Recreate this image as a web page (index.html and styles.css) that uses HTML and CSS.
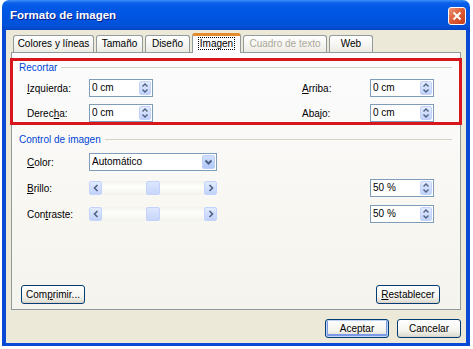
FILE: index.html
```html
<!DOCTYPE html>
<html lang="es">
<head>
<meta charset="UTF-8" />
<title>Formato de imagen</title>
<link rel="stylesheet" href="styles.css">
</head>
<body>

<div class="window">
  <div class="titlebar">
    <span class="title">Formato de imagen</span>
    <span class="close">
      <svg width="10" height="10" viewBox="0 0 10 10"><path d="M1.5 1.5 L8.5 8.5 M8.5 1.5 L1.5 8.5" stroke="#fff" stroke-width="2" fill="none"/></svg>
    </span>
  </div>

  <div class="body">
    <div class="tabs">
      <div class="tab tab-colores">Colores y líneas</div>
      <div class="tab tab-tamano">Tamaño</div>
      <div class="tab tab-diseno">Diseño</div>
      <div class="tab tab-imagen active"><span class="focus">Imagen</span></div>
      <div class="tab tab-cuadro disabled">Cuadro de texto</div>
      <div class="tab tab-web">Web</div>
    </div>

    <div class="panel">
      <div class="crop">
        <div class="legend">Recortar</div>
        <div class="crop-row">
          <label><u>I</u>zquierda:</label>
          <div class="spin"><span class="val">0 cm</span><span class="spin-btn"><svg width="8" height="12" viewBox="0 0 8 12"><path d="M1.5 4.5 L4 2 L6.5 4.5 M1.5 7.5 L4 10 L6.5 7.5" stroke="#4d6185" stroke-width="1.4" fill="none"/></svg></span></div>
          <span></span>
          <label><u>A</u>rriba:</label>
          <div class="spin"><span class="val">0 cm</span><span class="spin-btn"><svg width="8" height="12" viewBox="0 0 8 12"><path d="M1.5 4.5 L4 2 L6.5 4.5 M1.5 7.5 L4 10 L6.5 7.5" stroke="#4d6185" stroke-width="1.4" fill="none"/></svg></span></div>
        </div>
        <div class="crop-row">
          <label>Derec<u>h</u>a:</label>
          <div class="spin"><span class="val">0 cm</span><span class="spin-btn"><svg width="8" height="12" viewBox="0 0 8 12"><path d="M1.5 4.5 L4 2 L6.5 4.5 M1.5 7.5 L4 10 L6.5 7.5" stroke="#4d6185" stroke-width="1.4" fill="none"/></svg></span></div>
          <span></span>
          <label>Aba<u>j</u>o:</label>
          <div class="spin"><span class="val">0 cm</span><span class="spin-btn"><svg width="8" height="12" viewBox="0 0 8 12"><path d="M1.5 4.5 L4 2 L6.5 4.5 M1.5 7.5 L4 10 L6.5 7.5" stroke="#4d6185" stroke-width="1.4" fill="none"/></svg></span></div>
        </div>
      </div>

      <div class="section">
        <div class="legend">Control de imagen</div>
        <div class="ctrl-row first">
          <label><u>C</u>olor:</label>
          <div class="select"><span class="val">Automático</span><span class="drop-btn"><svg width="9" height="7" viewBox="0 0 9 7"><path d="M1.5 1.5 L4.5 4.5 L7.5 1.5" stroke="#4d6185" stroke-width="2" fill="none"/></svg></span></div>
        </div>
        <div class="ctrl-row">
          <label><u>B</u>rillo:</label>
          <div class="scroll">
            <span class="scroll-btn"><svg width="6" height="8" viewBox="0 0 6 8"><path d="M4.5 1 L1.5 4 L4.5 7" stroke="#4d6185" stroke-width="1.6" fill="none"/></svg></span>
            <span class="track"><span class="thumb"></span></span>
            <span class="scroll-btn"><svg width="6" height="8" viewBox="0 0 6 8"><path d="M1.5 1 L4.5 4 L1.5 7" stroke="#4d6185" stroke-width="1.6" fill="none"/></svg></span>
          </div>
          <span></span>
          <div class="spin"><span class="val">50 %</span><span class="spin-btn"><svg width="8" height="12" viewBox="0 0 8 12"><path d="M1.5 4.5 L4 2 L6.5 4.5 M1.5 7.5 L4 10 L6.5 7.5" stroke="#4d6185" stroke-width="1.4" fill="none"/></svg></span></div>
        </div>
        <div class="ctrl-row">
          <label>Con<u>t</u>raste:</label>
          <div class="scroll">
            <span class="scroll-btn"><svg width="6" height="8" viewBox="0 0 6 8"><path d="M4.5 1 L1.5 4 L4.5 7" stroke="#4d6185" stroke-width="1.6" fill="none"/></svg></span>
            <span class="track"><span class="thumb"></span></span>
            <span class="scroll-btn"><svg width="6" height="8" viewBox="0 0 6 8"><path d="M1.5 1 L4.5 4 L1.5 7" stroke="#4d6185" stroke-width="1.6" fill="none"/></svg></span>
          </div>
          <span></span>
          <div class="spin"><span class="val">50 %</span><span class="spin-btn"><svg width="8" height="12" viewBox="0 0 8 12"><path d="M1.5 4.5 L4 2 L6.5 4.5 M1.5 7.5 L4 10 L6.5 7.5" stroke="#4d6185" stroke-width="1.4" fill="none"/></svg></span></div>
        </div>
      </div>

      <div class="panel-buttons">
        <button>Com<u>p</u>rimir...</button>
        <button><u>R</u>establecer</button>
      </div>
    </div>

    <div class="footer">
      <button class="default">Aceptar</button>
      <button>Cancelar</button>
    </div>
  </div>
</div>

</body>
</html>
```

FILE: styles.css
```css
body {
  margin: 0;
  background: #fff;
  font-family: "Liberation Sans", Arial, sans-serif;
  font-size: 10px;
  color: #000;
}
.window {
  margin-left: 2px;
  width: 468px;
  height: 346px;
  display: flex;
  flex-direction: column;
}
.titlebar {
  height: 30px;
  flex: none;
  box-sizing: border-box;
  display: flex;
  align-items: center;
  justify-content: space-between;
  padding: 0 4px 0 8px;
  border-radius: 7px 7px 0 0;
  background: linear-gradient(#3d8ff6 0, #0b60ea 3px, #0058e6 8px, #0055e2 50%, #0151d9 85%, #0044c6 100%);
}
.title {
  color: #fff;
  font-weight: bold;
  font-size: 11.5px;
  text-shadow: 1px 1px #0a1d8c;
}
.close {
  width: 18px;
  height: 18px;
  margin-top: 2px;
  box-sizing: border-box;
  border: 1px solid #fff;
  border-radius: 3px;
  background: linear-gradient(135deg, #ec9a7a, #dc5a32 50%, #c8401c);
  display: flex;
  align-items: center;
  justify-content: center;
}
.body {
  flex: 1;
  display: flex;
  flex-direction: column;
  background: #ece9d8;
  border: solid #0a48d6;
  border-width: 0 4px 3px;
  padding: 3px 5px 0;
}
.tabs {
  height: 20px;
  display: flex;
  align-items: flex-end;
  gap: 2px;
  padding-left: 2px;
  position: relative;
  z-index: 1;
}
.tab {
  height: 17px;
  margin-bottom: 1px;
  box-sizing: border-box;
  text-align: center;
  line-height: 16px;
  border: 1px solid #919b9c;
  border-bottom: none;
  border-radius: 3px 3px 0 0;
  background: linear-gradient(#fff, #f4f4f0 60%, #ecebe2);
}
.tab-colores { width: 81px; }
.tab-tamano { width: 47px; }
.tab-diseno { width: 45px; }
.tab-imagen { width: 49px; }
.tab-cuadro { width: 84px; }
.tab-web { width: 44px; }
.tab.disabled {
  color: #aca899;
}
.tab.active {
  height: 20px;
  margin-bottom: 0;
  line-height: 16px;
  border-top: 3px solid #e68b2c;
  background: #fcfcfe;
}
.focus {
  outline: 1px dotted #000;
  padding: 0 1px;
}
.panel {
  height: 258px;
  margin-top: -1px;
  box-sizing: border-box;
  border: 1px solid #919b9c;
  background: linear-gradient(#fcfcfe, #f8f7f2 60%, #f4f3ee);
  display: flex;
  flex-direction: column;
}
.crop {
  margin: 5px -2px 0;
  border: 3px solid #d8161e;
  padding: 0 7px 0 6px;
}
.legend {
  height: 13px;
  display: flex;
  align-items: center;
  gap: 4px;
  color: #0046d5;
}
.legend::after {
  content: "";
  flex: 1;
  border-top: 1px solid #d5d2c4;
}
.crop-row {
  display: grid;
  grid-template-columns: 62px 64px 1fr 68px 64px;
  align-items: center;
  height: 18px;
  margin-top: 7px;
  padding: 0 18px 0 8px;
}
.legend + .crop-row {
  margin-top: 5px;
}
.spin,
.select {
  height: 18px;
  box-sizing: border-box;
  border: 1px solid #7f9db9;
  background: #fff;
  display: flex;
  align-items: stretch;
}
.spin {
  width: 64px;
}
.val {
  flex: 1;
  padding-left: 2px;
  line-height: 16px;
}
.spin-btn {
  width: 12px;
  margin: 1px 1px 1px 0;
  box-sizing: border-box;
  border: 1px solid #c3d3fd;
  border-radius: 2px;
  background: linear-gradient(#e2ebfe, #c1d2fa);
  display: flex;
  align-items: center;
  justify-content: center;
}
.section {
  margin-top: 8px;
  padding: 0 8px 0 7px;
}
.ctrl-row {
  display: grid;
  grid-template-columns: 62px 128px 1fr 64px;
  align-items: center;
  height: 18px;
  margin-top: 8px;
  padding: 0 18px 0 8px;
}
.ctrl-row.first {
  margin-top: 7px;
}
.select .drop-btn {
  width: 13px;
  margin: 1px;
  border-radius: 2px;
  background: linear-gradient(#d2e0fd, #b1c8f8);
  border: 1px solid #bccff9;
  box-sizing: border-box;
  display: flex;
  align-items: center;
  justify-content: center;
}
.scroll {
  height: 14px;
  display: flex;
  background: #fcfcf9;
}
.scroll-btn {
  width: 13px;
  box-sizing: border-box;
  border: 1px solid #c3d3fd;
  border-radius: 2px;
  background: linear-gradient(#e2ebfe, #c1d2fa);
  display: flex;
  align-items: center;
  justify-content: center;
}
.track {
  flex: 1;
  display: flex;
  justify-content: center;
  background: linear-gradient(#f3f3ee, #fefefb 40%, #f3f3ee);
}
.thumb {
  width: 14px;
  box-sizing: border-box;
  border: 1px solid #c3d3fd;
  border-radius: 2px;
  background: linear-gradient(#dde7fd, #c6d5fa);
}
.panel-buttons {
  margin-top: auto;
  padding: 0 20px 5px 9px;
  display: flex;
  justify-content: space-between;
}
button {
  width: 64px;
  height: 19px;
  padding: 0;
  font-family: "Liberation Sans", Arial, sans-serif;
  font-size: 10px;
  color: #000;
  border: 1px solid #003c74;
  border-radius: 3px;
  background: linear-gradient(#fff, #f5f4ef 60%, #e3e1d6 90%, #d6d0c5);
}
button.default {
  box-shadow: inset 0 0 0 1px #c2d4f7, inset 0 -1px 0 2px #7a9ae6;
}
.footer {
  margin-top: 9px;
  display: flex;
  justify-content: flex-end;
  gap: 8px;
}
```
